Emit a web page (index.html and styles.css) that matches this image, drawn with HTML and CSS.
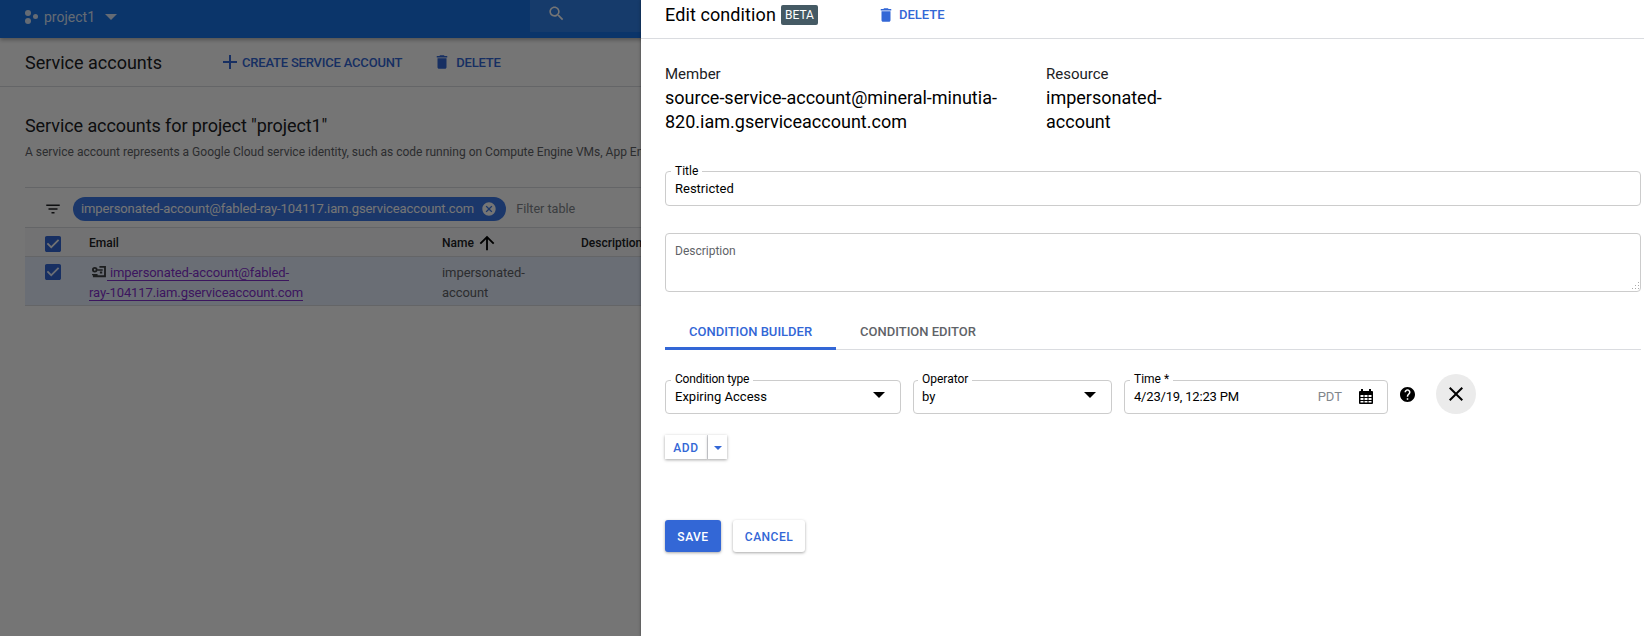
FILE: index.html
```html
<!DOCTYPE html>
<html lang="en">
<head>
    <meta charset="UTF-8">
    <meta name="viewport" content="width=device-width, initial-scale=1.0">
    <title>Edit condition</title>
    <link rel="stylesheet" href="styles.css">
</head>
<body>

    <div class="page">
        <header class="topbar">
            <svg class="project-icon" viewBox="0 0 14 14"><circle cx="4" cy="3" r="3"/><circle cx="11.5" cy="6.5" r="2.5"/><circle cx="4" cy="11" r="3"/></svg>
            <span class="project-name">project1</span>
            <span class="caret caret-top"></span>
            <div class="search">
                <svg class="search-icon" viewBox="0 0 24 24"><path d="M15.5 14h-.79l-.28-.27C15.41 12.59 16 11.11 16 9.5 16 5.91 13.09 3 9.5 3S3 5.91 3 9.5 5.91 16 9.5 16c1.61 0 3.09-.59 4.23-1.57l.27.28v.79l5 4.99L20.49 19l-4.99-5zm-6 0C7.01 14 5 11.99 5 9.5S7.01 5 9.5 5 14 7.01 14 9.5 11.99 14 9.5 14z"/></svg>
            </div>
        </header>

        <div class="subbar">
            <h1 class="subbar-title">Service accounts</h1>
            <a class="action action-create">
                <svg class="plus-icon" viewBox="0 0 14 14"><path d="M6 0h2v6h6v2H8v6H6V8H0V6h6z"/></svg>
                CREATE SERVICE ACCOUNT
            </a>
            <a class="action">
                <svg class="action-icon" viewBox="0 0 24 24"><path d="M6 19c0 1.1.9 2 2 2h8c1.1 0 2-.9 2-2V7H6v12zM19 4h-3.5l-1-1h-5l-1 1H5v2h14V4z"/></svg>
                DELETE
            </a>
        </div>

        <main class="content">
            <h2 class="content-title">Service accounts for project "project1"</h2>
            <p class="content-text">A service account represents a Google Cloud service identity, such as code running on Compute Engine VMs, App Engine apps, or systems running outside Google.</p>

            <div class="filter-row">
                <svg class="filter-icon" viewBox="0 0 24 24"><path d="M10 18h4v-2h-4v2zM3 6v2h18V6H3zm3 7h12v-2H6v2z"/></svg>
                <div class="chip">
                    impersonated-account@fabled-ray-104117.iam.gserviceaccount.com
                    <svg class="chip-close" viewBox="0 0 24 24"><path d="M12 2C6.47 2 2 6.47 2 12s4.47 10 10 10 10-4.47 10-10S17.53 2 12 2zm5 13.59L15.59 17 12 13.41 8.41 17 7 15.59 10.59 12 7 8.41 8.41 7 12 10.59 15.59 7 17 8.41 13.41 12 17 15.59z"/></svg>
                </div>
                <span class="filter-text">Filter table</span>
            </div>

            <div class="table-row table-head">
                <svg class="check" viewBox="3 3 18 18"><path d="M19 3H5c-1.11 0-2 .9-2 2v14c0 1.1.89 2 2 2h14c1.11 0 2-.9 2-2V5c0-1.1-.89-2-2-2zm-9 14l-5-5 1.41-1.41L10 14.17l7.59-7.59L19 8l-9 9z"/></svg>
                <span>Email</span>
                <span class="name-head">Name
                    <svg class="sort-icon" viewBox="0 0 24 24"><path d="M4 12l1.41 1.41L11 7.83V20h2V7.83l5.58 5.59L20 12l-8-8-8 8z"/></svg>
                </span>
                <span>Description</span>
            </div>
            <div class="table-row table-item">
                <svg class="check" viewBox="3 3 18 18"><path d="M19 3H5c-1.11 0-2 .9-2 2v14c0 1.1.89 2 2 2h14c1.11 0 2-.9 2-2V5c0-1.1-.89-2-2-2zm-9 14l-5-5 1.41-1.41L10 14.17l7.59-7.59L19 8l-9 9z"/></svg>
                <span class="email-cell">
                    <svg class="key-icon" viewBox="0 0 16 14"><path d="M9 0h7v12H2v-2h12V2H9zM4 1a3 3 0 1 1 0 6 3 3 0 0 1 0-6zm0 2a1 1 0 1 0 0 2 1 1 0 0 0 0-2zM1 8.500h6v1.500H1zM7 3.500h5.500V5H7zM9.500 6H12v2H9.500z"/></svg><a class="email-link">impersonated-account@fabled-ray-104117.iam.gserviceaccount.com</a>
                </span>
                <span class="name-cell">impersonated-account</span>
                <span></span>
            </div>
        </main>

        <div class="scrim"></div>

        <aside class="panel">
            <div class="panel-head">
                <h2 class="panel-title">Edit condition</h2>
                <span class="beta">BETA</span>
                <a class="panel-delete">
                    <svg class="action-icon" viewBox="0 0 24 24"><path d="M6 19c0 1.1.9 2 2 2h8c1.1 0 2-.9 2-2V7H6v12zM19 4h-3.5l-1-1h-5l-1 1H5v2h14V4z"/></svg>
                    DELETE
                </a>
            </div>

            <div class="panel-body">
                <div class="info">
                    <div class="info-member">
                        <div class="info-label">Member</div>
                        <div class="info-value">source-service-account@mineral-minutia-820.iam.gserviceaccount.com</div>
                    </div>
                    <div class="info-resource">
                        <div class="info-label">Resource</div>
                        <div class="info-value">impersonated-account</div>
                    </div>
                </div>

                <div class="field field-title">
                    <label class="field-label">Title</label>
                    <span>Restricted</span>
                </div>

                <div class="description">
                    <textarea class="description-input" id="description"></textarea>
                    <label class="description-label" for="description">Description</label>
                    <svg class="resize-grip" viewBox="0 0 9 9"><path d="M7 0h1v1H7zM7 3h1v1H7zM4 3h1v1H4zM7 6h1v1H7zM4 6h1v1H4zM1 6h1v1H1z"/></svg>
                </div>

                <div class="tabs">
                    <a class="tab tab-active">CONDITION BUILDER</a>
                    <a class="tab">CONDITION EDITOR</a>
                </div>

                <div class="condition">
                    <div class="field field-type">
                        <label class="field-label">Condition type</label>
                        <span>Expiring Access</span>
                        <span class="caret"></span>
                    </div>
                    <div class="field field-operator">
                        <label class="field-label">Operator</label>
                        <span>by</span>
                        <span class="caret"></span>
                    </div>
                    <div class="field field-time">
                        <label class="field-label">Time *</label>
                        <span class="time-value">4/23/19, 12:23 PM</span>
                        <span class="zone">PDT</span>
                        <svg class="calendar" viewBox="0 0 14 15"><path fill-rule="evenodd" d="M2 0h2v2h6V0h2v2h1a1 1 0 0 1 1 1v11a1 1 0 0 1-1 1H1a1 1 0 0 1-1-1V3a1 1 0 0 1 1-1h1zM1.500 6v2h3V6zm4 0v2h3V6zm4 0v2h3V6zm-8 3v2h3V9zm4 0v2h3V9zm4 0v2h3V9zm-8 3v1.500h3V12zm4 0v1.500h3V12zm4 0v1.500h3V12z"/></svg>
                    </div>
                    <svg class="help" viewBox="2 2 20 20"><path d="M12 2C6.480 2 2 6.480 2 12s4.480 10 10 10 10-4.480 10-10S17.520 2 12 2zm1 17h-2v-2h2v2zm2.070-7.750l-.9.920C13.450 12.900 13 13.500 13 15h-2v-.5c0-1.100.45-2.100 1.170-2.830l1.240-1.260c.37-.36.590-.86.590-1.410 0-1.100-.9-2-2-2s-2 .9-2 2H8c0-2.210 1.790-4 4-4s4 1.790 4 4c0 .88-.36 1.680-.93 2.250z"/></svg>
                    <div class="remove">
                        <svg class="remove-icon" viewBox="0 0 24 24"><path d="M19 6.410L17.590 5 12 10.590 6.410 5 5 6.410 10.590 12 5 17.590 6.410 19 12 13.410 17.590 19 19 17.590 13.410 12z"/></svg>
                    </div>
                </div>

                <div class="add">
                    <button class="add-main">ADD</button>
                    <button class="add-more"><span class="caret caret-blue"></span></button>
                </div>

                <div class="buttons">
                    <button class="btn btn-save">SAVE</button>
                    <button class="btn btn-cancel">CANCEL</button>
                </div>
            </div>
        </aside>
    </div>

</body>
</html>
```

FILE: styles.css
```css
* {
    box-sizing: border-box;
}
body {
    margin: 0;
    font-family: Roboto, "Liberation Sans", sans-serif;
    color: #202124;
    background: white;
}
.page {
    position: relative;
    width: 1644px;
    height: 636px;
    overflow: hidden;
}
.scrim {
    position: absolute;
    inset: 0;
    background: rgba(0, 0, 0, 0.54);
}

/* page under the drawer */
.topbar {
    display: flex;
    align-items: center;
    height: 38px;
    padding-left: 24px;
    background: #1a73e8;
    color: rgba(255, 255, 255, 0.85);
    box-shadow: 0 2px 4px rgba(0, 0, 0, 0.3);
}
.project-icon {
    width: 14px;
    height: 14px;
    fill: rgba(255, 255, 255, 0.85);
    margin-top: -4px;
}
.project-name {
    margin-left: 6px;
    font-size: 14px;
    margin-top: -4px;
}
.caret {
    width: 0;
    height: 0;
    border-left: 6px solid transparent;
    border-right: 6px solid transparent;
    border-top: 6px solid black;
}
.caret-top {
    margin-left: 10px;
    margin-top: -5px;
    border-top-color: rgba(255, 255, 255, 0.85);
}
.search {
    display: flex;
    align-items: center;
    align-self: flex-start;
    width: 720px;
    height: 32px;
    margin-left: 413px;
    padding-left: 17px;
    background: rgba(255, 255, 255, 0.1);
}
.search-icon {
    width: 19px;
    height: 19px;
    fill: white;
    margin-top: -5px;
}
.subbar {
    display: flex;
    align-items: center;
    height: 49px;
    padding-left: 25px;
    border-bottom: 1px solid #dadce0;
}
.subbar-title {
    width: 198px;
    margin: 0;
    font-size: 18px;
    font-weight: 400;
}
.action {
    display: flex;
    align-items: center;
    gap: 5px;
    font-size: 13px;
    font-weight: 500;
    letter-spacing: -0.2px;
    color: #3367d6;
}
.action-create {
    margin-right: 31px;
}
.plus-icon {
    width: 14px;
    height: 14px;
    fill: #3367d6;
}
.action-icon {
    width: 18px;
    height: 18px;
    fill: #3367d6;
}
.content {
    padding: 27px 0 0 25px;
}
.content-title {
    margin: 0;
    font-size: 18px;
    font-weight: 400;
    letter-spacing: -0.08px;
    line-height: 24px;
}
.content-text {
    width: 1100px;
    margin: 4px 0 0;
    font-size: 12px;
    line-height: 20px;
    color: #5f6368;
    white-space: nowrap;
}
.filter-row {
    display: flex;
    align-items: center;
    height: 41px;
    margin-top: 25px;
    border-top: 1px solid #dadce0;
    border-bottom: 1px solid #dadce0;
    padding: 2px 0 0 19px;
}
.filter-icon {
    width: 18px;
    height: 18px;
    fill: #202124;
}
.chip {
    display: flex;
    align-items: center;
    height: 24px;
    margin-left: 11px;
    padding: 0 9px 0 8px;
    border-radius: 12px;
    background: #3b78e7;
    color: white;
    font-size: 13px;
    letter-spacing: -0.1px;
    white-space: nowrap;
}
.chip-close {
    width: 16px;
    height: 16px;
    margin-left: 7px;
    fill: white;
}
.filter-text {
    margin-left: 10px;
    font-size: 12.600px;
    color: #80868b;
}
.table-row {
    display: grid;
    grid-template-columns: 64px 353px 139px 1fr;
    font-size: 12px;
    border-bottom: 1px solid #dadce0;
}
.table-row .check {
    width: 16px;
    height: 16px;
    margin-left: 20px;
    fill: #3367d6;
}
.table-head {
    height: 29px;
    padding-top: 2px;
    align-items: center;
    font-weight: 500;
    background: #f8f9fa;
    color: #202124;
}
.table-head .check {
    margin-top: 2px;
}
.name-head {
    display: flex;
    align-items: center;
    gap: 2px;
}
.sort-icon {
    width: 22px;
    height: 22px;
    fill: #000;
}
.table-item {
    height: 49px;
    padding-top: 6px;
    line-height: 20px;
    background: #e8f0fe;
    color: #5f6368;
}
.table-item .check {
    margin-top: 1px;
}
.email-cell {
    width: 220px;
    font-size: 13px;
    letter-spacing: -0.1px;
}
.key-icon {
    width: 15px;
    height: 13px;
    margin: 0 1px 0 2px;
    fill: #3c4043;
    vertical-align: -2px;
}
.email-link {
    padding-left: 3px;
    color: #8430ce;
    border-bottom: 1px solid #8430ce;
}
.name-cell {
    width: 100px;
    font-size: 13px;
    letter-spacing: -0.07px;
}

/* drawer */
.panel {
    position: absolute;
    top: 0;
    bottom: 0;
    left: 641px;
    right: 0;
    background: white;
    color: black;
    box-shadow: 0 0 3px rgba(0, 0, 0, 0.4);
}
.panel-head {
    display: flex;
    align-items: center;
    height: 39px;
    padding: 0 0 9px 24px;
    border-bottom: 1px solid #dadce0;
}
.panel-title {
    margin: 0;
    font-size: 18px;
    font-weight: 400;
    letter-spacing: 0.1px;
}
.beta {
    display: block;
    margin-left: 5px;
    padding: 0 4px;
    border-radius: 2px;
    background: #455a64;
    color: white;
    font-size: 12px;
    line-height: 20px;
}
.panel-delete {
    display: flex;
    align-items: center;
    gap: 4px;
    margin-left: 59px;
    font-size: 13px;
    font-weight: 500;
    color: #3367d6;
}
.panel-body {
    padding: 25px 3px 0 24px;
}
.info {
    display: flex;
}
.info-member {
    width: 381px;
    padding-right: 40px;
}
.info-resource {
    width: 130px;
}
.info-label {
    font-size: 15px;
    line-height: 20px;
    margin-bottom: 2px;
    color: #202124;
}
.info-value {
    font-size: 18px;
    line-height: 24px;
}
.field {
    position: relative;
    display: flex;
    align-items: center;
    height: 34px;
    padding: 0 12px 2px 9px;
    border: 1px solid #ccc;
    border-radius: 4px;
    font-size: 13px;
}
.field-title {
    height: 35px;
    margin-top: 37px;
    padding: 0 12px 0 9px;
}
.field-label {
    position: absolute;
    top: -8px;
    left: 5px;
    padding: 0 4px;
    background: white;
    font-size: 12px;
    line-height: 14px;
}
.condition .field-label {
    top: -9px;
}
.field-type .field-label {
    letter-spacing: -0.2px;
}
.description {
    position: relative;
    height: 59px;
    margin-top: 27px;
}
.description-input {
    display: block;
    width: 100%;
    height: 59px;
    border: 1px solid #ccc;
    border-radius: 4px;
    outline: none;
    background: white;
    resize: none;
}
.description-label {
    position: absolute;
    top: 10px;
    left: 10px;
    font-size: 12px;
    line-height: 16px;
    color: #5f6368;
}
.resize-grip {
    position: absolute;
    right: 1px;
    bottom: 1px;
    width: 9px;
    height: 9px;
    fill: #aaa;
}
.tabs {
    display: flex;
    height: 39px;
    margin-top: 19px;
    border-bottom: 1px solid #dadce0;
}
.tab {
    padding: 13px 24px 0;
    height: 39px;
    font-size: 13px;
    font-weight: 500;
    color: #5f6368;
}
.tab-active {
    color: #3367d6;
    border-bottom: 3px solid #3367d6;
}
.condition {
    display: flex;
    align-items: flex-end;
    margin-top: 24px;
}
.field .caret {
    margin-left: auto;
    margin-right: 3px;
    margin-top: -2px;
}
.field-type {
    width: 236px;
}
.field-operator {
    width: 199px;
    margin-left: 12px;
    padding-left: 8px;
}
.field-operator .field-label {
    left: 4px;
}
.field-time {
    width: 264px;
    margin-left: 12px;
}
.time-value {
    letter-spacing: -0.2px;
}
.zone {
    margin-left: auto;
    color: #80868b;
}
.calendar {
    width: 14px;
    height: 15px;
    margin-left: 17px;
    margin-right: 2px;
}
.help {
    width: 15px;
    height: 15px;
    margin-left: 12px;
    margin-bottom: 12px;
}
.remove {
    display: flex;
    align-items: center;
    justify-content: center;
    width: 40px;
    height: 40px;
    margin-left: 21px;
    border-radius: 50%;
    background: #ebebeb;
}
.remove-icon {
    width: 24px;
    height: 24px;
}
.add {
    display: flex;
    height: 24px;
    margin-top: 21px;
}
.add button {
    border: none;
    background: white;
    box-shadow: 0 1px 3px rgba(0, 0, 0, 0.35);
    font-family: inherit;
    font-size: 12px;
    font-weight: 500;
    letter-spacing: 0.6px;
    color: #3367d6;
    padding: 1px 0 0;
}
.add .add-main {
    width: 43px;
    border-right: 1px solid #dadce0;
}
.add-more {
    width: 19px;
    display: flex;
    align-items: center;
    justify-content: center;
}
.caret-blue {
    border-left-width: 4px;
    border-right-width: 4px;
    border-top-width: 4px;
    border-top-color: #3367d6;
}
.buttons {
    display: flex;
    gap: 12px;
    margin-top: 61px;
}
.btn {
    height: 32px;
    padding: 1px 0 0;
    border: none;
    border-radius: 3px;
    font-family: inherit;
    font-size: 12px;
    font-weight: 500;
    letter-spacing: 0.5px;
    box-shadow: 0 1px 3px rgba(0, 0, 0, 0.35);
}
.btn-save {
    width: 56px;
    background: #3367d6;
    color: white;
}
.btn-cancel {
    width: 72px;
    background: white;
    color: #3367d6;
}
```
